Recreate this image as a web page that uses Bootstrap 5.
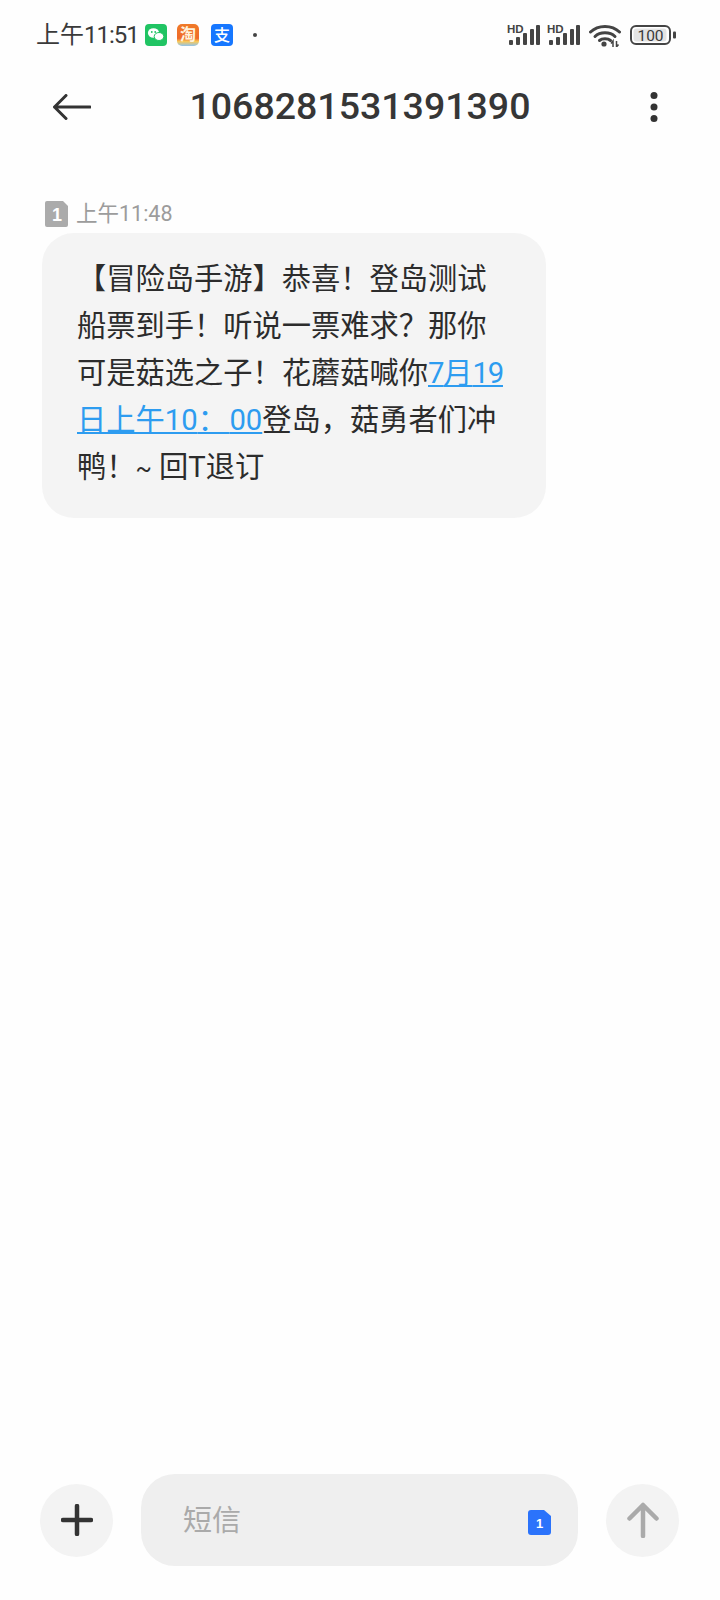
<!DOCTYPE html>
<html lang="zh-CN">
<head>
    <meta charset="UTF-8">
    <meta name="viewport" content="width=device-width, initial-scale=1.0">
    <title>短信</title>
    <link href="https://cdn.jsdelivr.net/npm/bootstrap@5.3.0/dist/css/bootstrap.min.css" rel="stylesheet">
    <style>
        body {
            font-family: Roboto, "Noto Sans CJK SC", sans-serif;
            background: #fefefe;
            color: #2f2f2f;
        }
        .phone-screen { width: 720px; height: 1600px; }
        .status-row { height: 70px; padding: 0 44px 0 36px; }
        .status-time { font-size: 24px; line-height: 1; color: #3a3a3a; width: 109px; white-space: nowrap; }
        .tight-digits { letter-spacing: -1px; }
        .app-icon { margin-left: 10px; overflow: visible; }
        .app-icon + .app-icon { margin-left: 12px; }
        .app-dot { width: 4px; height: 4px; border-radius: 50%; background: #444; margin-left: 20px; }
        .status-right { gap: 9px; }
        .signal-pair { gap: 7px; }
        .title-row { height: 74px; padding: 0 53px; }
        .title-num { font-size: 37.5px; font-weight: 500; color: #363636; line-height: 1; }
        .icon-slot { width: 38px; }
        .thread { padding: 57px 0 0 42px; }
        .msg-meta { font-size: 21.5px; line-height: 26px; color: #9c9c9c; padding-left: 3px; gap: 8px; margin-bottom: 6px; }
        .msg-bubble {
            width: 504px;
            height: 285px;
            background: #f4f4f4;
            border-radius: 32px;
            padding: 23px 30px 0 35px;
            font-size: 29.25px;
            line-height: 47px;
            color: #2c2c2c;
        }
        .msg-bubble a { color: #2d9cf0; text-decoration-thickness: 2px; text-underline-offset: 2px; }
        .link-digits { letter-spacing: -1.2px; }
        .link-colon { letter-spacing: 2.5px; }
        .tilde-ch { font-size: 24px; }
        .compose-row { padding: 0 41px 34px 40px; gap: 28px; }
        .round-btn { width: 73px; height: 73px; border-radius: 50%; background: #f3f3f3; flex: none; }
        .compose-box {
            width: 437px;
            height: 92px;
            border-radius: 34px;
            background: #efefef;
            padding: 4px 27px 0 42px;
            font-size: 29px;
            color: #aaa;
            flex: none;
        }
    </style>
</head>
<body>
    <div class="phone-screen d-flex flex-column">
        <!-- Status bar -->
        <div class="status-row d-flex align-items-center justify-content-between">
            <div class="d-flex align-items-center">
                <span class="status-time">上午<span class="tight-digits">11:51</span></span>
                <svg width="22" height="22" viewBox="0 0 22 22">
                    <rect width="22" height="22" rx="4" fill="#20c463"/>
                    <ellipse cx="8.5" cy="9" rx="5.6" ry="4.8" fill="#fff"/>
                    <ellipse cx="14" cy="12.5" rx="4.8" ry="4" fill="#fff" stroke="#20c463"/>
                    <circle cx="6.8" cy="8" r=".9" fill="#20c463"/>
                    <circle cx="10.2" cy="8" r=".9" fill="#20c463"/>
                </svg>
                <svg class="app-icon" width="22" height="22" viewBox="0 0 22 22">
                    <defs>
                        <linearGradient id="tb" x1="0" y1="0" x2="0" y2="1">
                            <stop offset="0" stop-color="#f07a28"/>
                            <stop offset=".65" stop-color="#ef6a2a"/>
                            <stop offset=".8" stop-color="#f8c95a"/>
                            <stop offset="1" stop-color="#8fc3ee"/>
                        </linearGradient>
                    </defs>
                    <rect width="22" height="22" rx="5" fill="url(#tb)"/>
                    <text x="11" y="16" font-size="16" font-weight="700" fill="#fff3dc" text-anchor="middle" font-family="Noto Sans CJK SC">淘</text>
                </svg>
                <svg class="app-icon" width="22" height="22" viewBox="0 0 22 22">
                    <rect width="22" height="22" rx="4" fill="#1677ff"/>
                    <text x="11" y="17" font-size="16" font-weight="500" fill="#fff" text-anchor="middle" font-family="Noto Sans CJK SC">支</text>
                </svg>
                <span class="app-dot"></span>
            </div>
            <div class="status-right d-flex align-items-center">
                <div class="signal-pair d-flex">
                    <svg width="33" height="22" viewBox="0 0 33 22">
                        <text x="0" y="9" font-size="11.500" font-weight="700" fill="#444" font-family="Liberation Sans">HD</text>
                        <g fill="#444">
                            <rect x="2" y="16" width="4" height="5" rx="1"/>
                            <rect x="9" y="13" width="4" height="8" rx="1"/>
                            <rect x="16" y="9" width="4" height="12" rx="1"/>
                            <rect x="23" y="5" width="4" height="16" rx="1"/>
                            <rect x="29" y="1" width="4" height="20" rx="1"/>
                        </g>
                    </svg>
                    <svg width="33" height="22" viewBox="0 0 33 22">
                        <text x="0" y="9" font-size="11.500" font-weight="700" fill="#444" font-family="Liberation Sans">HD</text>
                        <g fill="#444">
                            <rect x="2" y="16" width="4" height="5" rx="1"/>
                            <rect x="9" y="13" width="4" height="8" rx="1"/>
                            <rect x="16" y="9" width="4" height="12" rx="1"/>
                            <rect x="23" y="5" width="4" height="16" rx="1"/>
                            <rect x="29" y="1" width="4" height="20" rx="1"/>
                        </g>
                    </svg>
                </div>
                <svg width="32" height="23" viewBox="0 0 32 23">
                    <g fill="none" stroke="#444" stroke-width="3" stroke-linecap="round">
                        <path d="M1.500 8C9 .5 23 .5 30.500 8"/>
                        <path d="M6 12.500C11 7.500 21 7.500 26 12.500"/>
                        <path d="M10.500 16.500C13 14.300 19 14.300 21.500 16.500"/>
                    </g>
                    <circle cx="15" cy="20" r="2.600" fill="#444"/>
                    <path d="M24 23v-6l-2 2.500M27.500 17v6l2-2.500" fill="none" stroke="#444" stroke-width="1.500"/>
                </svg>
                <svg width="46" height="21" viewBox="0 0 46 21">
                    <rect x="1" y="1" width="39" height="18" rx="5" fill="#fff" stroke="#444" stroke-width="2"/>
                    <rect x="3.500" y="3.500" width="33" height="13" rx="3" fill="#e3e3e3"/>
                    <text x="20.500" y="15.500" font-size="15.500" fill="#3a3a3a" text-anchor="middle" font-family="Roboto">100</text>
                    <rect x="43" y="6.500" width="3" height="7" rx="1" fill="#444"/>
                </svg>
            </div>
        </div>

        <!-- Title bar -->
        <div class="title-row d-flex align-items-center justify-content-between">
            <div class="icon-slot">
                <svg class="d-block" width="38" height="26" viewBox="0 0 38 26">
                    <path d="M13 1.500 1.500 13 13 24.500M1.500 13H37" fill="none" stroke="#333" stroke-width="3" stroke-linecap="round" stroke-linejoin="round"/>
                </svg>
            </div>
            <div class="title-num">1068281531391390</div>
            <div class="icon-slot d-flex justify-content-end pe-2">
                <svg width="10" height="32" viewBox="0 0 10 32">
                    <circle cx="5" cy="4.500" r="3.500" fill="#333"/>
                    <circle cx="5" cy="16" r="3.500" fill="#333"/>
                    <circle cx="5" cy="27.500" r="3.500" fill="#333"/>
                </svg>
            </div>
        </div>

        <!-- Message thread -->
        <div class="thread flex-grow-1">
            <div class="msg-meta d-flex align-items-center">
                <svg width="23" height="26" viewBox="0 0 23 26">
                    <path d="M2 0H18L23 5V24a2 2 0 0 1-2 2H2a2 2 0 0 1-2-2V2a2 2 0 0 1 2-2Z" fill="#ababab"/>
                    <text x="12" y="20" font-size="18" font-weight="700" fill="#fff" text-anchor="middle" font-family="Liberation Sans">1</text>
                </svg>
                <span>上午11:48</span>
            </div>
            <div class="msg-bubble">【冒险岛手游】恭喜！登岛测试<br>船票到手！听说一票难求？那你<br>可是菇选之子！花蘑菇喊你<a href="#"><span class="link-digits">7</span>月<span class="link-digits">19</span><br>日上午10<span class="link-colon">：</span>00</a>登岛，菇勇者们冲<br>鸭！<span class="tilde-ch">~</span> 回T退订</div>
        </div>

        <!-- Compose bar -->
        <div class="compose-row d-flex align-items-center">
            <div class="round-btn d-flex align-items-center justify-content-center">
                <svg width="32" height="32" viewBox="0 0 32 32">
                    <path d="M16 2V30M2 16H30" stroke="#333" stroke-width="4.500" stroke-linecap="round"/>
                </svg>
            </div>
            <div class="compose-box d-flex align-items-center justify-content-between">
                <span>短信</span>
                <svg width="23" height="25" viewBox="0 0 23 25">
                    <path d="M3 0H16L23 6V22a3 3 0 0 1-3 3H3a3 3 0 0 1-3-3V3a3 3 0 0 1 3-3Z" fill="#2b73fb"/>
                    <text x="11.500" y="18" font-size="13" font-weight="700" fill="#fff" text-anchor="middle" font-family="Liberation Sans">1</text>
                </svg>
            </div>
            <div class="round-btn d-flex align-items-center justify-content-center">
                <svg width="32" height="36" viewBox="0 0 32 36">
                    <path d="M16 34V3M2.500 16.500 16 3 29.500 16.500" fill="none" stroke="#aaa" stroke-width="4.500" stroke-linecap="round" stroke-linejoin="round"/>
                </svg>
            </div>
        </div>
    </div>
    <script src="https://cdn.jsdelivr.net/npm/bootstrap@5.3.0/dist/js/bootstrap.bundle.min.js"></script>
</body>
</html>
